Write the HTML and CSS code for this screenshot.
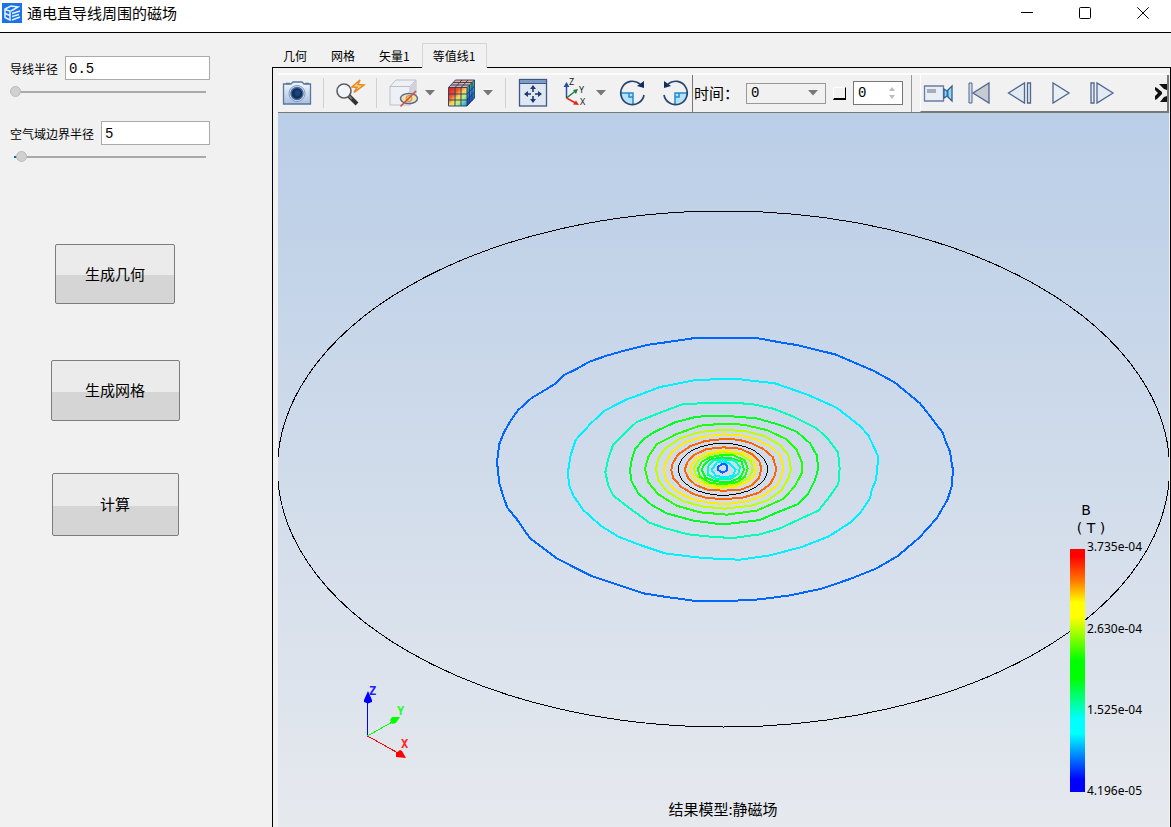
FILE: index.html
```html
<!DOCTYPE html>
<html lang="zh-CN">
<head>
<meta charset="utf-8">
<title>通电直导线周围的磁场</title>
<link rel="stylesheet" href="styles.css">
</head>
<body>
<div class="window">
  <header class="titlebar">
    <svg class="logo" viewBox="0 0 20 20"><rect width="20" height="20" fill="#1a73e8"/><g fill="none" stroke="#e6f1ff" stroke-width="1.500"><path d="M3 6.500l5 1.500v9L3 14.500zM3 6l6-3 7 1-7 4" /><path d="M10 10.500l8-2.500M10 13.500l7-2M10 17l8-3M3 10.500l5 2"/></g></svg>
    <h1 class="title">通电直导线周围的磁场</h1>
    <div class="window-controls">
      <button class="winbtn" aria-label="最小化"><svg viewBox="0 0 12 12"><path d="M0 5.500h12"/></svg></button>
      <button class="winbtn" aria-label="最大化"><svg viewBox="0 0 12 12"><rect x=".5" y=".5" width="11" height="11" rx="1"/></svg></button>
      <button class="winbtn" aria-label="关闭"><svg viewBox="0 0 12 12"><path d="M.3.3l11.400 11.400M11.700.3L.3 11.700"/></svg></button>
    </div>
  </header>
  <div class="body">
    <aside class="sidebar">
      <div class="field">
        <label for="wire">导线半径</label><input class="text" id="wire" type="text" value="0.5">
      </div>
      <input class="slider" type="range" min="0" max="100" value="0" aria-label="导线半径">
      <div class="field">
        <label for="air">空气域边界半径</label><input class="text" id="air" type="text" value="5">
      </div>
      <input class="slider slider-air" type="range" min="0" max="100" value="3" aria-label="空气域边界半径">
      <div class="actions">
        <button class="action geometry">生成几何</button>
        <button class="action mesh">生成网格</button>
        <button class="action compute">计算</button>
      </div>
    </aside>
    <main class="main">
      <nav class="tabs">
        <button class="tab">几何</button><button class="tab">网格</button><button class="tab">矢量1</button><button class="tab active">等值线1</button>
      </nav>
      <section class="panel">
        <div class="toolbar">
          <div class="group g-camera">
            <button class="tool" aria-label="截图"><svg viewBox="0 0 30 30"><defs><linearGradient id="cam" x2="0" y2="1"><stop stop-color="#f4f8fc"/><stop offset="1" stop-color="#a9c0df"/></linearGradient></defs><path d="M2 6h7l2-2h9l2 2h6.500v20H1.500V6z" fill="url(#cam)" stroke="#5875a0" stroke-width="1.300"/><path d="M4 5.500h4M23 5.500h4" stroke="#5875a0" stroke-width="1.500"/><circle cx="15" cy="15.500" r="8" fill="#dce7f4" stroke="#7d96bb"/><circle cx="15" cy="15.500" r="6" fill="#10305e" stroke="#456a9e" stroke-width="1.500"/><circle cx="15.500" cy="15" r="3" fill="#1d4377"/></svg></button>
          </div>
          <div class="group g-zoom">
            <button class="tool" aria-label="缩放"><svg viewBox="0 0 30 30"><circle cx="9" cy="13" r="7" fill="#f0f4f8" stroke="#5a5f66" stroke-width="1.600"/><path d="M5 11a5 5 0 0 1 4-3" fill="none" stroke="#fff" stroke-width="1.500"/><path d="M14 18l8 8" stroke="#333" stroke-width="4"/><path d="M14 18l3 3" stroke="#777" stroke-width="2"/><path d="M25 2l-8 7 5 .5-3 5 10-7.500-6-.5z" fill="#ffd58a" stroke="#e8871e" stroke-width="1.500"/></svg></button>
          </div>
          <div class="group g-display">
            <button class="tool" aria-label="隐藏"><svg viewBox="0 0 30 30"><path d="M1 8.500L7 2h20v18l-6 7H1z" fill="#edf0f5" stroke="#b9bfca"/><path d="M1 8.500h20V27M21 8.500L27 2" fill="none" stroke="#b9bfca"/><path d="M21 9l6-7v18l-6 6z" fill="#cdd2dc"/><ellipse cx="20" cy="20.500" rx="8.500" ry="5" fill="#f7dfaa" stroke="#576b91" stroke-width="1.500"/><circle cx="20" cy="20.500" r="3" fill="#f2c879" stroke="#bb914b"/><path d="M11.500 28.500L27 13" stroke="#dc4a35" stroke-width="1.600"/></svg></button>
            <button class="drop" aria-label="更多"><svg viewBox="0 0 12 6"><path d="M1 0h10L6 5.500z"/></svg></button>
            <button class="tool" aria-label="云图"><svg viewBox="0 0 30 30"><defs><linearGradient id="hot" x1=".1" y1=".1" x2="1" y2="1"><stop stop-color="#e8231e"/><stop offset=".25" stop-color="#f5572d"/><stop offset=".45" stop-color="#ffd34d"/><stop offset=".65" stop-color="#b0f080"/><stop offset="1" stop-color="#158ff5"/></linearGradient><linearGradient id="side" x2="0" y2="1"><stop stop-color="#3fb83c"/><stop offset=".45" stop-color="#2a8fd8"/><stop offset="1" stop-color="#1238b8"/></linearGradient></defs><path d="M1.500 9.500L8.500 2h19L20 9.500z" fill="#e9b18f"/><path d="M20 9.500L27.500 2v18L20 28z" fill="url(#side)"/><path d="M1.500 9.500H20V28H1.500z" fill="url(#hot)"/><path d="M1.500 9.500H20V28H1.500zM8 9.500V28M14 9.500V28M1.500 16H20l7.500-8M1.500 22H20l7.500-8M1.500 9.500L8.500 2h19v18L20 28M20 9.500L27.500 2M8 9.500L15 2M14 9.500L21 2M4 7h18.500v18.500M6 4.500h19V23" fill="none" stroke="#24386a" stroke-width=".9"/></svg></button>
            <button class="drop" aria-label="更多"><svg viewBox="0 0 12 6"><path d="M1 0h10L6 5.500z"/></svg></button>
          </div>
          <div class="group g-view">
            <button class="tool" aria-label="适应窗口"><svg viewBox="0 0 30 30"><rect x="1.500" y="1.500" width="27" height="26.500" fill="#dfe7f2" stroke="#3e5883" stroke-width="1.300"/><path d="M2 2h26v3H2z" fill="#7e9bc7"/><path d="M2 5.500h26" stroke="#3e5883"/><path d="M15 10v4M15 18v4M9 16h4M17 16h4" stroke="#1f3a68" stroke-width="1.600"/><path d="M15 7l-3 4h6zM15 25l-3-4h6zM6 16l4-3v6zM24 16l-4-3v6z" fill="#1f3a68"/></svg></button>
            <button class="tool" aria-label="视图方向"><svg viewBox="0 0 30 30"><path d="M6.500 20V8" stroke="#254eb0" stroke-width="1.500"/><path d="M6.500 4l-3 5h6z" fill="#254eb0"/><path d="M6.500 20l9-7" stroke="#18803a" stroke-width="1.500"/><path d="M18 11l-5 1 3 4z" fill="#18803a"/><path d="M6.500 20l9 5" stroke="#e52620" stroke-width="1.500"/><path d="M19 27l-6-.5 3-4z" fill="#e52620"/><text class="axis-label" x="9" y="7">Z</text><text class="axis-label" x="19" y="15">Y</text><text class="axis-label" x="20" y="27">X</text></svg></button>
            <button class="drop" aria-label="更多"><svg viewBox="0 0 12 6"><path d="M1 0h10L6 5.500z"/></svg></button>
            <button class="tool" aria-label="顺时针旋转"><svg viewBox="0 0 30 30"><path d="M3 15h12v11C8 26 4 22 3 15z" fill="#b5e3fb"/><path d="M3 15h12v11M11 15v4h4" fill="none" stroke="#238bd0" stroke-width="1.500"/><path d="M26 17a11.700 11.700 0 1 1-4-11" fill="none" stroke="#29466f" stroke-width="1.700"/><path d="M26 3v7l-7-2z" fill="#142e5c"/></svg></button>
            <button class="tool" aria-label="逆时针旋转"><svg viewBox="0 0 30 30"><path d="M27 15H15v11c7 0 11-4 12-11z" fill="#b5e3fb"/><path d="M27 15H15v11M19 15v4h-4" fill="none" stroke="#238bd0" stroke-width="1.500"/><path d="M4 17A11.700 11.700 0 1 0 8 6" fill="none" stroke="#29466f" stroke-width="1.700"/><path d="M4 3v7l7-2z" fill="#142e5c"/></svg></button>
          </div>
          <div class="group g-time">
            <label class="time-label" for="time">时间：</label>
            <div class="combo"><select id="time"><option>0</option></select><svg viewBox="0 0 12 6"><path d="M1 0h10L6 5.500z"/></svg></div>
            <input class="check" type="checkbox" aria-label="启用步数">
            <div class="spin"><input type="text" value="0" aria-label="步数"><svg viewBox="0 0 8 12"><path d="M1 4h6L4 0zM1 8h6L4 12z"/></svg></div>
          </div>
          <div class="playback">
            <button class="tool" aria-label="录制"><svg viewBox="0 0 30 30"><path d="M1.500 8h19v15h-19z" fill="#e9eef5" stroke="#697da0" stroke-width="1.300"/><rect x="4" y="11" width="9" height="4" fill="#a3acb7"/><path d="M21 11l3 2 5-5v15l-5-5-3 2z" fill="#9ed4ef" stroke="#2f5e91" stroke-width="1.300"/><path d="M24.500 12v7" stroke="#1b74b2" stroke-width="2"/></svg></button>
            <button class="tool" aria-label="第一帧"><svg viewBox="0 0 30 30"><path d="M5 5h3v20H5z" fill="#d5dce6" stroke="#50678f"/><path d="M25 5v20L9 15z" fill="#c5cad3" stroke="#50678f" stroke-width="1.300"/></svg></button>
            <button class="tool" aria-label="上一帧"><svg viewBox="0 0 30 30"><path d="M19.500 5v20L3.500 15zM22.500 5h3v20h-3z" fill="#e2eaf2" stroke="#50678f" stroke-width="1.300"/></svg></button>
            <button class="tool" aria-label="播放"><svg viewBox="0 0 30 30"><path d="M7 5v20l16-10z" fill="#e8f0f5" stroke="#50678f" stroke-width="1.300"/></svg></button>
            <button class="tool" aria-label="下一帧"><svg viewBox="0 0 30 30"><path d="M4 5h3v20H4zM10 5v20l16-10z" fill="#e2eaf2" stroke="#50678f" stroke-width="1.300"/></svg></button>
            <button class="more" aria-label="更多工具"><svg viewBox="0 0 12 18"><path d="M4 0h8v6L9 5zM12 18H5l4-5 3-1zM0 3l2 1 5 4v2l-5 5-2 1v-4l3-3-3-3z" fill="#111"/></svg></button>
          </div>
        </div>
        <div class="scene">
          <svg class="plot" viewBox="278 113 891 714" role="img" aria-label="磁场等值线">
            <g fill="none" shape-rendering="crispEdges">
              <ellipse cx="723.500" cy="469" rx="446" ry="258" stroke="#000"/>
              <g class="contours" transform="translate(480 320) scale(.33333)">
                <polygon stroke="#0066ff" points="720,54 830,54 900,67 950,75 1065,103 1180,152 1245,188 1320,250 1350,288 1388,338 1398,367 1410,395 1415,430 1419,450 1415,500 1403,538 1370,595 1318,653 1253,708 1190,745 1110,777 1025,806 930,826 840,838 765,842 640,842 560,831 490,820 410,793 332,767 230,715 150,655 110,597 82,563 70,530 58,490 51,425 58,372 73,335 95,297 115,270 155,234 190,213 228,190 250,166 290,147 328,125 380,107 440,90 500,75 550,68 645,54"/>
                <polygon stroke="#00f0ff" points="720,177 642,181 540,201 480,224 440,238 372,273 330,313 287,360 272,405 264,455 267,495 280,527 310,570 362,617 415,650 480,675 555,700 650,712 720,717 780,719 870,706 965,681 1045,650 1115,605 1140,580 1170,535 1175,510 1188,480 1195,410 1165,346 1140,318 1070,263 985,225 885,190 780,178"/>
                <polygon stroke="#00ffb8" points="720,248 610,252 540,278 470,306 435,338 400,373 385,415 376,457 385,497 400,527 440,558 508,608 560,626 625,643 700,651 760,654 840,643 900,625 960,597 1015,572 1045,535 1075,492 1079,445 1074,397 1045,358 1010,325 940,290 880,266 820,253 760,248"/>
                <polygon stroke="#00ff20" points="650,290 585,307 525,335 490,358 465,388 455,420 450,450 455,485 475,520 515,555 560,580 640,602 710,611 750,611 840,600 885,580 955,552 985,520 1005,480 1015,445 1010,405 990,370 950,335 900,315 830,295 730,287"/>
                <polygon stroke="#22ff00" points="660,317 590,342 530,373 505,410 495,447 505,487 535,523 590,557 660,577 740,584 830,572 910,537 945,498 965,460 965,425 950,390 920,358 860,330 790,314 730,311"/>
                <polygon stroke="#bfff00" points="730,329 660,336 600,355 555,386 535,415 528,447 535,480 560,514 610,544 670,560 735,566 815,557 865,540 905,510 925,475 933,447 925,405 900,375 855,349 800,334"/>
                <polygon stroke="#ffee00" points="730,343 670,350 615,367 575,397 558,425 551,450 560,483 590,515 635,537 680,547 735,553 800,544 850,527 890,497 906,465 910,440 900,406 875,382 830,359 790,347"/>
                <polygon stroke="#ff6600" points="730,357 675,363 630,379 594,404 578,430 574,450 580,475 604,501 640,522 680,534 730,537 785,534 835,519 870,493 885,465 889,445 878,411 850,387 810,368 775,359"/>
                <ellipse class="thin" stroke="#000" cx="729" cy="448" rx="134" ry="78"/>
                <polygon stroke="#ff6600" points="730,382 680,387 640,406 622,427 614,450 625,475 647,495 685,510 730,512 780,510 815,496 837,474 844,446 838,423 817,403 780,386"/>
                <polygon stroke="#ffee00" points="730,391 685,399 649,414 632,438 631,456 645,480 680,497 720,504 770,499 805,485 825,464 829,444 820,418 790,400"/>
                <polygon stroke="#bfff00" points="730,397 690,404 655,421 642,445 647,465 675,488 728,500 775,491 805,475 818,451 813,423 780,403"/>
                <polygon stroke="#22ff00" points="728,404 690,412 665,425 653,448 660,470 690,488 728,493 770,487 795,470 803,445 794,421 760,406"/>
                <polygon stroke="#00ff20" points="725,412 690,419 672,435 665,450 677,473 705,484 750,486 780,473 792,450 785,425 755,415"/>
                <polygon stroke="#00ffb8" points="728,418 700,421 683,441 685,465 710,477 750,477 775,461 780,442 765,422"/>
                <polygon stroke="#00f0ff" points="728,424 710,428 695,450 707,467 730,472 758,468 767,449 748,430"/>
                <polygon stroke="#0066ff" points="727,432 715,440 715,450 728,458 741,451 742,440 734,432"/>
              </g>
              <path d="M367.500 736V702" stroke="#00f"/><path d="M367.500 736L394 721" stroke="#0f0"/><path d="M367.500 736L398 753" stroke="#f00"/>
            </g>
            <path d="M368 691l4 9v2l-4 1.500-4-1.500v-2z" fill="#00f"/><path d="M400 717l-4 6-4 1-2-4 2-3z" fill="#0f0"/><path d="M406 758l-10-1v-4l4-3 2 1z" fill="#f00"/>
            <text class="triad" x="369" y="695" fill="#2222ff">Z</text><text class="triad" x="397" y="715" fill="#22ff22">Y</text><text class="triad" x="401" y="748" fill="#ff2222">X</text>
            <defs><linearGradient id="rainbow" x2="0" y2="1"><stop stop-color="#f00"/><stop offset=".03" stop-color="#f00"/><stop offset=".13" stop-color="#ff7800"/><stop offset=".22" stop-color="#ff0"/><stop offset=".28" stop-color="#ff0"/><stop offset=".46" stop-color="#0f0"/><stop offset=".53" stop-color="#0f0"/><stop offset=".7" stop-color="#0ff"/><stop offset=".76" stop-color="#0ff"/><stop offset=".95" stop-color="#00f"/></linearGradient></defs>
            <rect x="1070" y="549" width="15" height="243" fill="url(#rainbow)"/>
            <text class="legend-title" x="1086" y="515">B</text><text class="legend-title" x="1091" y="533">( T )</text>
            <g class="legend-value"><text x="1087" y="551">3.735e-04</text><text x="1087" y="633">2.630e-04</text><text x="1087" y="714">1.525e-04</text><text x="1087" y="795">4.196e-05</text></g>
            <text class="caption" x="723" y="815">结果模型:静磁场</text>
          </svg>
        </div>
      </section>
    </main>
  </div>
</div>
</body>
</html>
```
FILE: styles.css
```css
* { box-sizing: border-box; }

body {
  margin: 0;
  background: #f1f1f1;
  color: #000;
  font-family: "Noto Sans CJK SC", sans-serif;
  font-size: 12px;
}

button {
  margin: 0;
  padding: 0;
  border: 0;
  background: none;
  color: inherit;
  font: inherit;
}

svg { display: block; }

.window {
  display: flex;
  flex-direction: column;
  height: 100vh;
}

.titlebar {
  display: flex;
  align-items: center;
  flex: none;
  height: 33px;
  padding: 0 22px 6px 2px;
  border-bottom: 1px solid #000;
  background: #fff;
}

.logo { width: 20px; height: 20px; }

.title {
  margin: 0 0 0 5px;
  font-size: 15px;
  font-weight: 400;
  line-height: 22px;
}

.window-controls {
  display: flex;
  gap: 46px;
  margin-left: auto;
}

.winbtn svg {
  width: 12px;
  height: 12px;
  overflow: visible;
  fill: none;
  stroke: #000;
}

.body {
  display: flex;
  flex: 1;
  min-height: 0;
}

.sidebar {
  flex: none;
  width: 271px;
  padding: 23px 61px 0 10px;
}

.field {
  display: flex;
  align-items: center;
  gap: 7px;
  height: 24px;
}

.text {
  flex: 1;
  min-width: 0;
  height: 24px;
  padding: 2px 3px 0;
  border: 1px solid #aaa;
  background: #fff;
  font-family: "Liberation Mono", monospace;
  font-size: 14px;
}

.slider {
  display: block;
  width: 196px;
  height: 13px;
  margin: 5px 0 23px;
  appearance: none;
  background: linear-gradient(#aaa, #aaa) center / 100% 2px no-repeat;
}

.slider-air {
  background: linear-gradient(#0067c0, #0067c0) 4px center / 4px 2px no-repeat, linear-gradient(#aaa, #aaa) right center / 188px 2px no-repeat;
}

.slider::-webkit-slider-thumb {
  width: 11px;
  height: 11px;
  appearance: none;
  border: 1px solid #bbb;
  border-radius: 50%;
  background: #d0d0d0;
}

.actions {
  display: flex;
  flex-direction: column;
  align-items: center;
  width: 210px;
  padding-top: 58px;
}

.action {
  padding-bottom: 2px;
  border: 1px solid #7d7d7d;
  border-radius: 2px;
  background: linear-gradient(#ebebeb 52%, #d5d5d5 52%);
  font-size: 15px;
}

.geometry { width: 120px; height: 60px; }
.mesh { width: 129px; height: 61px; margin-top: 56px; }
.compute { width: 127px; height: 63px; margin-top: 52px; }

.main {
  display: flex;
  flex: 1;
  flex-direction: column;
  min-width: 0;
  padding-top: 10px;
}

.tabs { display: flex; height: 24px; }

.tab { height: 25px; padding: 0 12px; }

.tab.active {
  z-index: 1;
  padding: 0 11px 1px 10px;
  border: 1px solid #d5d5d5;
  border-bottom: 0;
  background: #f1f1f1;
}

.panel {
  display: flex;
  flex: 1;
  flex-direction: column;
  min-height: 0;
  margin-left: 1px;
  padding: 5px 1px 0 5px;
  border: 1px solid #000;
  border-bottom: 0;
}

.toolbar {
  display: flex;
  flex: none;
  height: 40px;
  border-top: 2px solid #fcfcfc;
  border-bottom: 1px solid #777;
}

.group {
  display: flex;
  align-items: center;
  flex: none;
  margin: 3px 0 4px;
  border-right: 1px solid #d0d0d0;
}

.g-camera { padding: 0 11px 0 4px; }
.g-zoom { padding: 0 11px; }
.g-display { padding: 0 0 0 12px; }
.g-view { padding: 0 2px 1px 12px; margin: 0; border-color: #777; }
.g-time { padding: 0 8px 1px 1px; margin: 0; border-color: #999; }

.tool,
.tool svg { width: 30px; height: 30px; overflow: visible; }

.drop { margin: 0 11px 0 5px; }

.drop svg,
.combo svg { width: 12px; height: 6px; fill: #777; }

.g-view .tool + .tool { margin-left: 12px; }

.axis-label { font: 9px "Noto Sans", sans-serif; fill: #222; }

.time-label { width: 52px; padding-bottom: 2px; font-size: 15px; white-space: nowrap; }

.combo {
  display: flex;
  align-items: center;
  width: 80px;
  height: 21px;
  padding-right: 6px;
  border: 1px solid #999;
}

.combo select,
.spin input {
  flex: 1;
  min-width: 0;
  padding: 0 0 0 4px;
  border: 0;
  appearance: none;
  background: none;
  color: #000;
  font: 14px "Liberation Mono", monospace;
}

.check {
  width: 13px;
  height: 13px;
  margin: 0 7px;
  appearance: none;
  border: 1px solid #fff;
  border-right-color: #000;
  border-bottom: 2px solid #000;
}

.spin {
  display: flex;
  align-items: center;
  width: 50px;
  height: 24px;
  padding-right: 6px;
  border: 1px solid #777;
  background: #fff;
}

.spin svg { width: 8px; height: 12px; fill: #bbb; }

.playback {
  display: flex;
  align-items: center;
  flex: 1;
  gap: 11px;
  margin-left: 8px;
  padding: 0 0 1px 2px;
  border-right: 2px solid #777;
  border-bottom: 1px solid #777;
  border-left: 1px solid #fff;
}

.more { margin-left: auto; }
.more svg { width: 12px; height: 18px; }

.scene {
  flex: 1;
  min-height: 0;
  background: linear-gradient(#bacee7, #e6e9ee);
}

.plot { width: 100%; height: 100%; }

.contours { stroke-width: 6px; }
.contours .thin { stroke-width: 3px; }

.triad { font: bold 12px "DejaVu Sans Mono", monospace; }
.legend-title { font: 14px "DejaVu Sans", sans-serif; text-anchor: middle; }
.legend-value { font: 12px "Noto Sans", sans-serif; }
.caption { font-size: 15px; text-anchor: middle; }
```
